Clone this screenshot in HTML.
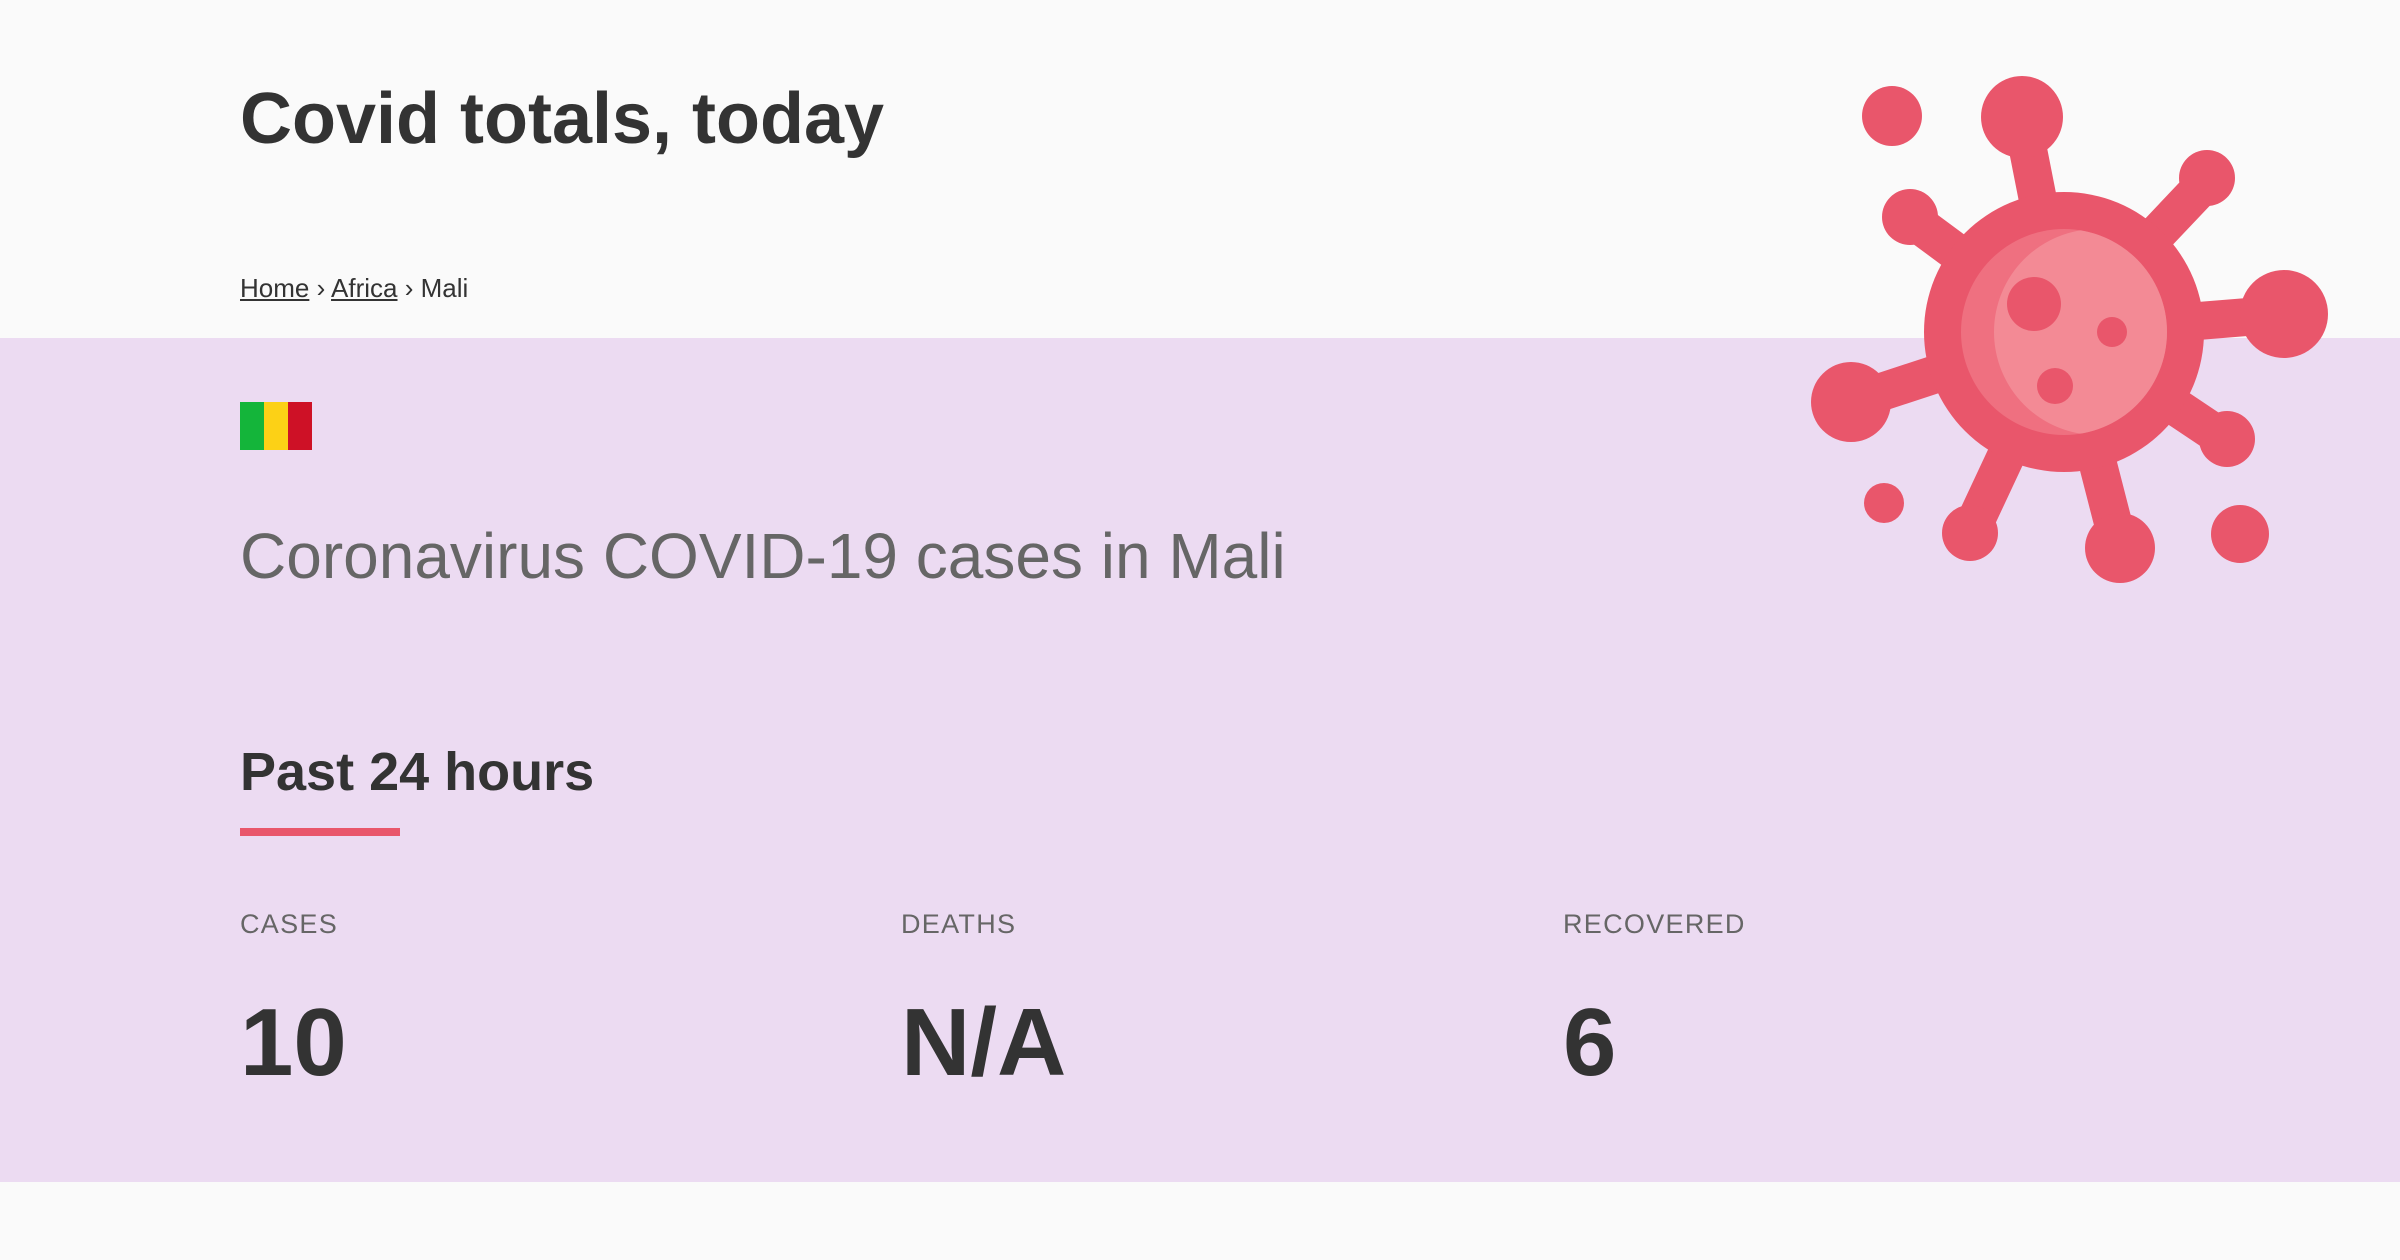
<!DOCTYPE html>
<html><head><meta charset="utf-8"><style>
html,body{margin:0;padding:0;width:2400px;height:1260px;overflow:hidden;background:#fafafa;font-family:"Liberation Sans",Arial,sans-serif;color:#333}
.band{position:absolute;left:0;top:338px;width:2400px;height:844px;background:#ecdbf2}
.abs{position:absolute;white-space:nowrap;margin:0}
h1{position:absolute;left:240px;top:76px;margin:0;font-size:72px;font-weight:bold;line-height:1.2;color:#333}
.bc{left:240px;top:270px;font-size:26px;line-height:36px;color:#333}
.bc a{color:#333;text-decoration:underline}
.flag{position:absolute;left:240px;top:402px;width:72px;height:48px;display:flex}
.flag i{flex:1}
.sub{left:240px;top:516px;font-size:64px;line-height:80px;color:#666}
.h2{left:240px;top:740px;font-size:54px;font-weight:bold;line-height:64px;color:#333}
.bar{position:absolute;left:240px;top:828px;width:160px;height:8px;background:#e9566b}
.lab{top:906px;font-size:27px;line-height:36px;color:#666;letter-spacing:1.3px}
.num{top:988px;font-size:96px;font-weight:bold;line-height:110px;color:#333}
</style></head><body>
<div class="band"></div>
<h1>Covid totals, today</h1>
<div class="abs bc"><a>Home</a> › <a>Africa</a> › Mali</div>
<div class="flag"><i style="background:#14b53a"></i><i style="background:#fcd116"></i><i style="background:#ce1126"></i></div>
<div class="abs sub">Coronavirus COVID-19 cases in Mali</div>
<div class="abs h2">Past 24 hours</div>
<div class="bar"></div>
<div class="abs lab" style="left:240px">CASES</div>
<div class="abs lab" style="left:901px">DEATHS</div>
<div class="abs lab" style="left:1563px">RECOVERED</div>
<div class="abs num" style="left:240px">10</div>
<div class="abs num" style="left:901px">N/A</div>
<div class="abs num" style="left:1563px">6</div>
<svg class="abs" style="left:0;top:0" width="2400" height="1260">
<defs><clipPath id="ic"><circle cx="2064" cy="332" r="103"/></clipPath></defs>
<g fill="#e9566b" stroke="#e9566b" stroke-linecap="round">
<g stroke-width="38">
<line x1="2064" y1="332" x2="2022" y2="119"/>
<line x1="2064" y1="332" x2="2207" y2="181"/>
<line x1="2064" y1="332" x2="2284" y2="314"/>
<line x1="2064" y1="332" x2="2227" y2="441"/>
<line x1="2064" y1="332" x2="2120" y2="550"/>
<line x1="2064" y1="332" x2="1970" y2="533"/>
<line x1="2064" y1="332" x2="1851" y2="402"/>
<line x1="2064" y1="332" x2="1910" y2="218"/>
</g>
<g stroke="none">
<circle cx="2064" cy="332" r="140"/>
<circle cx="2022" cy="117" r="41"/>
<circle cx="2207" cy="178" r="28"/>
<circle cx="2284" cy="314" r="44"/>
<circle cx="2227" cy="439" r="28"/>
<circle cx="2120" cy="548" r="35"/>
<circle cx="1970" cy="533" r="28"/>
<circle cx="1851" cy="402" r="40"/>
<circle cx="1910" cy="217" r="28"/>
<circle cx="1892" cy="116" r="30"/>
<circle cx="1884" cy="503" r="20"/>
<circle cx="2240" cy="534" r="29"/>
</g></g>
<circle cx="2064" cy="332" r="103" fill="#ef7080"/>
<circle cx="2097" cy="332" r="103" fill="#f38a95" clip-path="url(#ic)"/>
<g fill="#e9566b">
<circle cx="2034" cy="304" r="27"/>
<circle cx="2112" cy="332" r="15"/>
<circle cx="2055" cy="386" r="18"/>
</g>
</svg>
</body></html>
